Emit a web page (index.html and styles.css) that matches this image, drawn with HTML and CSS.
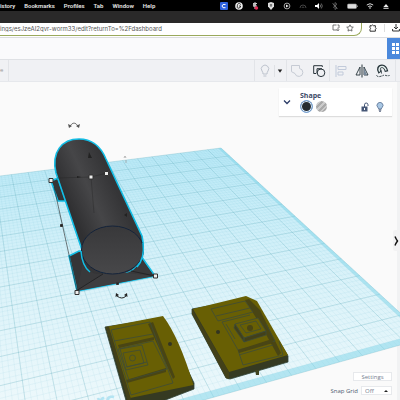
FILE: index.html
```html
<!DOCTYPE html>
<html lang="en">
<head>
<meta charset="utf-8">
<meta name="viewport" content="width=device-width, initial-scale=1">
<title>3D design editor</title>
<link rel="stylesheet" href="styles.css">
</head>
<body>
<div class="app">
  <header class="menubar">
    <nav class="menus">
      <a href="#">istory</a><a href="#">Bookmarks</a><a href="#">Profiles</a><a href="#">Tab</a><a href="#">Window</a><a href="#">Help</a>
    </nav>
    <div class="tray">
      <svg viewBox="0 0 8 8"><rect width="8" height="8" rx="1" fill="#2f62dd"/><path d="M5.5 2.5H3L2 4l1 1.7h2.5" fill="none" stroke="#fff"/></svg>
      <svg viewBox="0 0 8 8"><circle cx="4" cy="4" r="3.8" fill="#eee"/><path d="M5.8 2.5Q3-.2 2.3 3.8T5.5 5.2V4H4" fill="none" stroke="#222" stroke-width=".9"/></svg>
      <svg viewBox="0 0 8 8"><path d="M4 0v7M2 1.5h4M2 4h4" stroke="#ccc"/><circle cx="3.5" cy="3" r="1.7" fill="#bbb"/><circle cx="5.4" cy="6" r="1.8" fill="#e12c55"/></svg>
      <svg viewBox="0 0 8 8"><path d="M1 1l3-1 3 1v3.5L4 8 1 4.5z" fill="#ddd"/><path d="M4 2v3M2.8 3h2.4" stroke="#444" stroke-width=".8"/></svg>
      <svg viewBox="0 0 8 8"><circle cx="4" cy="4" r="2.9" fill="none" stroke="#ccc" stroke-width=".8"/><path d="M3 2.5L5.7 4 3 5.5z" fill="#eee"/></svg>
      <svg viewBox="0 0 8 8" fill="none" stroke="#444"><path d="M1 6a3 3 0 1 1 6 0M3 6a1 1 0 1 1 2 0"/></svg>
      <svg viewBox="0 0 8 8"><path d="M0 3h2l2-2v6L2 5H0z" fill="#fff"/><path d="M5 2.5q1.3 1.5 0 3M6.3 1.5q2 2.5 0 5" fill="none" stroke="#aaa" stroke-width=".6"/></svg>
      <svg viewBox="0 0 8 8"><path d="M2 2.3l4 3.5L4 7.5V.5l2 1.7-4 3.5M1.5 1l5 6" fill="none" stroke="#777" stroke-width=".7"/></svg>
      <svg class="wide" viewBox="0 0 11 8"><rect x=".5" y="2" width="9" height="4.5" rx="1" fill="#ddd" stroke="#999" stroke-width=".6"/><path d="M10.3 3.5v1.5" stroke="#999"/></svg>
      <svg viewBox="0 0 8 8" fill="none" stroke="#ddd"><path d="M.8 3q3.2-2.6 6.4 0M2.2 4.7q1.8-1.5 3.6 0"/><circle cx="4" cy="6" r=".4"/></svg>
      <svg viewBox="0 0 8 8"><path d="M1.4 5L4 2l2.6 3zM1.4 5.7h5.2v1H1.4z" fill="#eee"/></svg>
    </div>
  </header>
  <div class="tabstrip"></div>
  <div class="browser">
    <div class="address">
      <input type="text" aria-label="Address" value="ings/esJzeAI2qvr-worm33/edit?returnTo=%2Fdashboard">
      <button aria-label="Cast"><svg viewBox="0 0 8 8"><path d="M4.5 1H1v5h4M5.5 1H7v3M6 3.5v3M4.8 5.5L6 6.8l1.2-1.3" fill="none" stroke="#555" stroke-width=".8"/></svg></button>
      <button aria-label="Bookmark"><svg viewBox="0 0 8 8"><path d="M4 .8l1 2.1 2.3.3-1.7 1.6.4 2.3-2-1.1-2 1.1.4-2.3L.7 3.2 3 2.9z" fill="none" stroke="#555" stroke-width=".8"/></svg></button>
    </div>
    <button aria-label="Extensions"><svg viewBox="0 0 8 8"><path d="M1 1.7h1.7Q3.5.2 4.4 1.7h2v1.8q1.5.8 0 1.7v2H1V5.3q1.2-.9 0-1.8z" fill="none" stroke="#333"/></svg></button>
    <i class="split"></i>
    <button aria-label="Downloads"><svg viewBox="0 0 8 8"><path d="M4 0v4.5M2 3l2 2 2-2M.6 5v2h6.8V5" fill="none" stroke="#333"/></svg></button>
  </div>
  <div class="titlebar"><button class="blocks" aria-label="Designs"><svg viewBox="0 0 13 22"><path d="M5 5h3v3H5zM9 5h3v3H9zM5 9h3v3H5zM9 9h3v3H9zM5 13h3v3H5zM9 13h3v3H9z" fill="#fff"/></svg></button></div>
  <div class="toolbar">
    <span class="left">e</span>
    <div class="group show">
      <button aria-label="Show all"><svg viewBox="0 0 14 14"><path d="M5 10q0-2-1-3a3.7 3.7 0 1 1 6 0q-1 1-1 3zM5.4 12h3" fill="none" stroke="#bdc3cd"/></svg></button>
      <i></i>
      <button class="tiny" aria-label="Show options"><svg viewBox="0 0 6 6"><path d="M.8 1.5h4.4L3 4.7z" fill="#222"/></svg></button>
    </div>
    <div class="group">
      <button aria-label="Group"><svg viewBox="0 0 14 14"><path d="M1.5 1.5h8v3a4 4 0 1 1-4.5 5L1.5 7.7z" fill="none" stroke="#c6cbd4"/></svg></button>
      <button aria-label="Ungroup"><svg viewBox="0 0 14 14" fill="none" stroke="#29343b"><path d="M4 9.5H1.7V1.7h8.6V3M5 9.5V4.7h5"/><circle cx="9" cy="8.8" r="3.8"/></svg></button>
    </div>
    <div class="group wide">
      <button aria-label="Align"><svg viewBox="0 0 14 14" fill="none" stroke="#c1cada"><path d="M2 1v12M4 2.500h8v3H4zM4 8h5v3H4z"/></svg></button>
      <button aria-label="Mirror"><svg viewBox="0 0 14 14"><path d="M7 .5v13" stroke="#26343a"/><path d="M5 3v8H1zM9 3v8h4z" fill="none" stroke="#26343a" stroke-width=".9"/><path d="M9 4l3 7H9z" fill="#789"/></svg></button>
      <button aria-label="Magnet"><svg viewBox="0 0 14 14" fill="none"><path d="M4 8.600C1.500 5 3 2.200 6 2.200S10 5 10.600 7.600" stroke="#26343a" stroke-width="3.600"/><path d="M3.700 7.600C2.300 5 3.500 2.600 6 2.600s3.500 2 4.200 4" stroke="#e6efee" stroke-width="1.500"/><path d="M5.600 9.600L5 5.600" stroke="#26343a" stroke-width=".8"/><path d="M.5 11.500q1.500 1.500 3.500 1t3-1 3 0 3.500 0" stroke="#26343a" stroke-dasharray="2 1"/></svg></button>
    </div>
  </div>
  <main class="stage">
    <svg class="scene" viewBox="0 82 400 318" preserveAspectRatio="xMidYMid slice" aria-label="Workplane with models">
      <defs>
        <linearGradient id="water" x1="0" y1="148" x2="0" y2="400" gradientUnits="userSpaceOnUse"><stop stop-color="#b9e9f7"/><stop offset=".5" stop-color="#d9f2f9"/><stop offset="1" stop-color="#ecf8fb"/></linearGradient>
        <linearGradient id="body" x1="80" y1="230" x2="125" y2="210" gradientUnits="userSpaceOnUse"><stop stop-color="#303032"/><stop offset=".5" stop-color="#464648"/><stop offset="1" stop-color="#353537"/></linearGradient>
        <linearGradient id="cap" x1="0" y1="225" x2="0" y2="275" gradientUnits="userSpaceOnUse"><stop stop-color="#38383a"/><stop offset="1" stop-color="#48484a"/></linearGradient>
      </defs>
      <path id="plane" fill="url(#water)"/>
      <path id="fine" class="fine"/>
      <path id="coarse" class="coarse"/>
      <path id="rim" fill="#7ed3e8" opacity=".5"/>
      <text class="mark" x="97" y="409" transform="rotate(-9 97 409)">rc</text>

      <g class="ship">
        <path d="M51 181l7-3 8 23h-8z" class="part glow"/>
        <path d="M69 256l10-5 60 2 16 23-78 15z" class="part glow"/>
        <path d="M56 173C51 152 62 139 79 139c14 0 22 8 27 20l36 77c5 21-5 34-17 38-16 2-34-2-42-21z" class="glow" fill="url(#body)"/>
        <path d="M83 262q4 10 14 12h26q12-2 19-14l12 16-77 15z" fill="#39393b"/>
        <path d="M76 291l28-18h22l28 3z" fill="#3e3e40"/>
        <path d="M76 291l27-17M155 276l-24-5" stroke="#242426" fill="none"/>
        <ellipse cx="112.500" cy="250" rx="31" ry="24" fill="url(#cap)" stroke="#14233a"/>
        <path d="M81 251q1 15 9 21M143 243q2 15-6 24" class="cyan"/>
        <path d="M57 178l34-1 16-4M91 177l3 36" class="guide faint"/>
        <path d="M54 187l23 104" class="guide"/>
        <path d="M88 158l1-6 3 6zM124 215l3-2v4zM77 176l4 1-4 1z" fill="#222"/>
      </g>
      <g class="handles">
        <path d="M49 178.500h4v4h-4zM89 175h4v4h-4zM104.500 171.500h4v4h-4zM153.500 274h4v4h-4zM75 290.500h4v4h-4z"/>
        <path class="solid" d="M60.500 224.500h2v2h-2zM116.500 282.500h2v2h-2z"/>
      </g>
      <g class="turn"><path d="M70 126q4-6 8 0" stroke="#777"/><path d="M68 124l1 4 3-2zM80 124l-1 4-3-2z" fill="#555"/><path d="M117 296q5 4 9 0" stroke="#222"/><path d="M115.500 297l.5-4 3 2zM127.500 297l-.5-4-3 2z" fill="#222"/><path d="M124 158l1-2 1 2M126 160v3" stroke="#999" stroke-width=".7"/></g>

      <g class="plate">
        <path class="side" d="M105 327l22 77h28l39-15v-6l-31-65z"/>
        <path class="top" d="M106 327l57-11q16 21 30.500 69L130 398z"/>
        <path class="shade" d="M106 327l3 0 22 72-3 3z"/>
        <path class="dark" d="M148 324l5-2 22 55-2 2zM118 345l36-8v3l-35 8zM126 380l40-12v4l-39 11z"/>
        <path class="line" d="M111 330l39-8 23 61-42 12zM114 341l39-7M118 349l35-8 14 28-38 11zM120 349l22-4 6 20-22 5zM123 353l17-3 4 13-17 4zM126 367l21-5"/>
        <circle cx="132.500" cy="358" r="3" class="line"/><circle cx="170" cy="344" r="2" fill="#333521"/>
      </g>
      <g class="plate">
        <path class="side" d="M192 309v5l34 64 4 1 58-17v-6l-31-51-11-6z"/>
        <path class="top" d="M193 309l53-13 11 5 31 54-59 17z"/>
        <path class="shade" d="M192 309l37 63v7l-3-1-34-64z"/>
        <path class="dark" d="M245 300l4-1 11 11 21 43-3 3-15-27z"/>
        <path class="line" d="M211 309l34-8 8 11-35 9zM216 316l34-8M222 322l28-7M222 322l16 28 37-9-9-17M238 350l5 15 40-10-4-14M239 355l34-10M226 324l9 15"/>
        <path class="dark" d="M238 350l34-11 1 4-34 10z"/>
        <path class="top line" d="M235 324l23-6 8 13-22 7z"/><path class="shade line" d="M235 324l9 14v4l-10-14zM244 338l22-7v4l-22 7z"/>
        <path class="line" d="M240 325l16-4 5 8-15 4z"/><circle cx="250" cy="328" r="3" class="dark"/><circle cx="218" cy="332" r="2" fill="#333521"/>
        <path d="M255 370h4v5h-3z" fill="#41441f"/>
      </g>
    </svg>

    <section class="inspector">
      <button class="fold" aria-label="Collapse"><svg viewBox="0 0 8 8"><path d="M1 2.500l3 3 3-3" fill="none" stroke="#2a3b66" stroke-width="1.300"/></svg></button>
      <div class="kind">
        <h2>Shape</h2>
        <div class="swatches"><button class="solidfill" aria-label="Solid"></button><button class="hole" aria-label="Hole"></button></div>
      </div>
      <button aria-label="Lock"><svg viewBox="0 0 10 10"><path d="M1.500 4.500h6v5h-6z" fill="#465777"/><path d="M4.500 5V2.800Q4.500 1 6.200 1T8 2.800V4" fill="none" stroke="#465777"/><path d="M4.500 6v2" stroke="#fff"/></svg></button>
      <button aria-label="Hide"><svg viewBox="0 0 10 10"><path d="M3.600 7q0-1-.8-1.600a3 3 0 1 1 4.400 0Q6.400 6 6.400 7z" fill="#a9c7e3" stroke="#587092" stroke-width=".8"/><path d="M3.700 8h2.600M4.200 9.300h1.600" stroke="#3b4a68"/></svg></button>
    </section>
    <button class="drawer" aria-label="Toggle shapes panel"><svg viewBox="0 0 5 12"><path d="M1 1.500Q2 4 3.500 6 2 8 1 10.500" fill="none" stroke="#111" stroke-width="1.400"/></svg></button>
    <footer class="settings">
      <button class="box">Settings</button>
      <div class="snap"><label for="snap">Snap Grid</label><span class="pick"><select id="snap" class="box"><option>Off</option></select></span></div>
    </footer>
  </main>
</div>
<script src="grid.js"></script>
</body>
</html>
```
FILE: styles.css
```css
* { box-sizing: border-box; }
body { margin: 0; font-family: "Open Sans", "Noto Sans", sans-serif; font-size: 6px; background: #fafafa; }
button, input, select { font: inherit; color: inherit; border: 0; padding: 0; margin: 0; background: none; }
button { display: flex; align-items: center; justify-content: center; flex: none; }
svg { display: block; }
a { color: inherit; text-decoration: none; }
.app { min-height: 100vh; display: flex; flex-direction: column; overflow: hidden; }

.menubar { height: 11px; background: #000; color: #e6e6e6; display: flex; align-items: center; justify-content: space-between; font: 600 6px/10px Roboto, sans-serif; }
.menus { display: flex; gap: 9px; }
.tray { display: flex; align-items: center; gap: 8px; padding-right: 10px; }
.tray svg { width: 8px; height: 8px; }
.tray .wide { width: 11px; }
.tray svg:first-child { margin-right: -1px; }
.tabstrip { height: 12px; background: #2a2929; }
.browser { height: 15px; background: #fff; border-bottom: 1px solid #dcdde0; display: flex; align-items: flex-start; gap: 7px; color: #555; font-family: Inter, sans-serif; }
.browser svg { width: 8px; height: 8px; }
.browser > button { height: 10px; }
.address { flex: 1; min-width: 0; height: 13px; display: flex; align-items: flex-start; gap: 6px; padding-right: 7px; border: solid #9aa95c; border-width: 0 1px 1px 0; border-radius: 0 0 8px 0; }
.address button { height: 10px; }
.address input { flex: 1; min-width: 0; height: 10px; }
.split { width: 1px; height: 8px; background: #ddd; margin-top: 1px; }

.titlebar { height: 22px; background: #fafafc; display: flex; justify-content: flex-end; border-bottom: 1px solid #dfe1e5; }
.blocks { background: #4a88dc; width: 13px; }
.toolbar { height: 22px; background: #f0f1f4; display: flex; align-items: stretch; border-bottom: 1px solid #e6e8ec; padding-right: 4px; }
.left { width: 9px; border-right: 1px solid #e2e4e8; color: #999; line-height: 20px; margin-right: auto; }
.group { display: flex; align-items: center; gap: 8px; padding: 0 3px; border-left: 1px solid #e2e4e8; }
.group svg { width: 14px; height: 14px; }
.group.show { gap: 2px; }
.group.show i { width: 1px; height: 12px; background: #dfe1e5; }
.group .tiny svg { width: 6px; height: 6px; }
.group.wide { gap: 7px; padding: 0 5px 0 4px; border-right: 1px solid #e2e4e8; }

.stage { flex: 1; min-height: 318px; position: relative; display: flex; flex-direction: column; align-items: flex-end; justify-content: space-between; border-right: 3px solid #f1f2f3; }
.scene { position: absolute; top: 0; left: 0; width: calc(100% + 3px); height: 100%; }
.fine { fill: none; stroke: #64bdd0; stroke-width: .4; opacity: .22; }
.coarse { fill: none; stroke: #5fabbd; stroke-width: .6; opacity: .5; }
.mark { font: 700 20px "Open Sans", sans-serif; fill: #b4e4f2; }
.part { fill: #353537; }
.glow { stroke: #12bde5; stroke-width: 1.6; }
.cyan { fill: none; stroke: #12bde5; stroke-width: 1.5; }
.guide { fill: none; stroke: #222; stroke-width: .6; }
.guide.faint { opacity: .6; }
.handles { fill: #eee; stroke: #333; stroke-width: 1; }
.handles .solid { fill: #222; }
.turn { fill: none; stroke-width: 1; }
.side { fill: #353a22; stroke: #304236; stroke-width: .8; }
.top { fill: #685f04; }
.shade { fill: #424019; }
.dark { fill: #494514; }
.line { stroke: #3d4b38; stroke-width: .8; }
.line:not(.top):not(.shade) { fill: none; }

.inspector { position: relative; width: 113px; height: 28px; margin: 6px 5px 0 0; background: #fff; box-shadow: 0 1px 1px #ddd; display: flex; align-items: center; padding: 0 7px 0 4px; }
.fold svg { width: 8px; height: 8px; }
.kind { margin: 0 auto 0 9px; }
.kind h2 { margin: 0; font: 700 7px/9px "Open Sans", sans-serif; color: #3b4866; }
.swatches { display: flex; gap: 3px; align-items: center; }
.swatches button { width: 11px; height: 11px; border-radius: 50%; }
.swatches .solidfill { width: 13px; height: 13px; background: #262c31; border: 1px solid #7aa9df; box-shadow: inset 0 0 0 1px #dcebfa; }
.swatches .hole { background: repeating-linear-gradient(135deg, #aaa 0 2px, #ccc 2px 4px); }
.inspector > button:not(.fold) { margin: 10px 0 0 5px; }
.inspector > button:not(.fold) svg { width: 10px; height: 10px; }
.drawer { position: absolute; top: 148px; right: -3px; width: 7px; height: 21px; background: #f2f2f3; border-radius: 2px 0 0 2px; }
.drawer svg { width: 5px; height: 12px; }
.settings { position: relative; display: flex; flex-direction: column; align-items: flex-end; gap: 5px; padding: 0 5px 5px 0; color: #75808f; line-height: 8px; }
.box { height: 9px; background: #fff; border: 1px solid #e7e9ec; }
.settings > .box { width: 39px; }
.snap { display: flex; align-items: center; gap: 3px; color: #4f5d70; }
.pick { position: relative; color: #75808f; }
.pick select { display: block; appearance: none; width: 31px; padding: 0 3px; }
.pick::after { content: ""; position: absolute; right: 4px; top: 4px; border: solid transparent; border-width: 0 2px 2px; border-bottom-color: #222; }
```
FILE: grid.js
```js
// Perspective projection of the workplane: origin at its far corner.
function project(u, v) {
  const a = -0.0082 * u, b = -0.0313 * v, w = 1 + a + b;
  return [(221 + a * 1837 - b * 43) / w, (148 - a * 57 - b * 95) / w];
}
const U = 34, V = 14;
const at = (u, v) => project(u, v).map(n => n.toFixed(2)).join(" ");
const line = (a, b, c, d) => `M${at(a, b)}L${at(c, d)}`;
const quad = (...p) => "M" + p.map(q => at(...q)).join("L") + "Z";
let fine = "", coarse = "";
for (let i = 0; i <= U * 5; i++) {
  if (i % 5) fine += line(i / 5, 0, i / 5, V);
  else coarse += line(i / 5, 0, i / 5, V);
}
for (let i = 0; i <= V * 5; i++) {
  if (i % 5) fine += line(0, i / 5, U, i / 5);
  else coarse += line(0, i / 5, U, i / 5);
}
const set = (id, d) => document.getElementById(id).setAttribute("d", d);
set("plane", quad([0, 0], [U, 0], [U, V], [0, V]));
set("fine", fine);
set("coarse", coarse);
set("rim", quad([0, 0], [0.2, 0], [0.2, V], [0, V]) + quad([0.2, V - 0.2], [U, V - 0.2], [U, V], [0.2, V]));
```
